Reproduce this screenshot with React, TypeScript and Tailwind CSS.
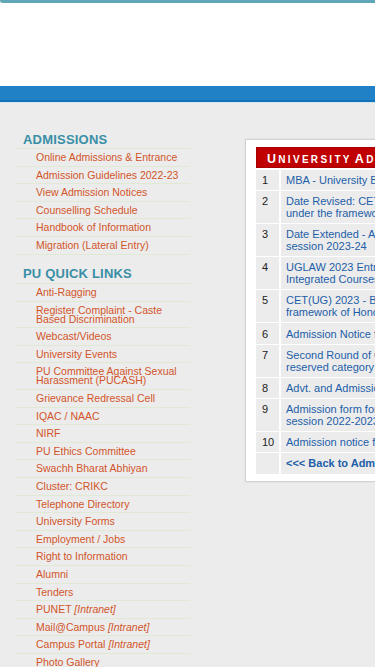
import React from "react";

type Item = { t: string; extra?: string };

const admissions: Item[] = [
  { t: "Online Admissions & Entrance" },
  { t: "Admission Guidelines 2022-23" },
  { t: "View Admission Notices" },
  { t: "Counselling Schedule" },
  { t: "Handbook of Information" },
  { t: "Migration (Lateral Entry)" },
];

const quick: Item[] = [
  { t: "Anti-Ragging" },
  { t: "Register Complaint - Caste\nBased Discrimination" },
  { t: "Webcast/Videos" },
  { t: "University Events" },
  { t: "PU Committee Against Sexual\nHarassment (PUCASH)" },
  { t: "Grievance Redressal Cell" },
  { t: "IQAC / NAAC" },
  { t: "NIRF" },
  { t: "PU Ethics Committee" },
  { t: "Swachh Bharat Abhiyan" },
  { t: "Cluster: CRIKC" },
  { t: "Telephone Directory" },
  { t: "University Forms" },
  { t: "Employment / Jobs" },
  { t: "Right to Information" },
  { t: "Alumni" },
  { t: "Tenders" },
  { t: "PUNET", extra: "[Intranet]" },
  { t: "Mail@Campus", extra: "[Intranet]" },
  { t: "Campus Portal", extra: "[Intranet]" },
  { t: "Photo Gallery" },
  { t: "Contact Us" },
];

const rows: { n: string; lines: string[]; bold?: boolean }[] = [
  { n: "1", lines: ["MBA - University Business School (UBS) Admissions 2023-24"] },
  { n: "2", lines: ["Date Revised: CET(PG) 2023 for admission to various PG Courses", "under the framework of NEP-2020"] },
  { n: "3", lines: ["Date Extended - Admission to B.Ed. Courses for the", "session 2023-24"] },
  { n: "4", lines: ["UGLAW 2023 Entrance Test for admission to 5-Year", "Integrated Courses B.A./B.Com. LL.B. (Hons.)"] },
  { n: "5", lines: ["CET(UG) 2023 - B.Sc. (Hons.) in various subjects under the", "framework of Honours School System"] },
  { n: "6", lines: ["Admission Notice for session 2023-24"] },
  { n: "7", lines: ["Second Round of Counselling for vacant seats of", "reserved category candidates"] },
  { n: "8", lines: ["Advt. and Admission Schedule 2023-24"] },
  { n: "9", lines: ["Admission form for Ph.D. programme for the", "session 2022-2023"] },
  { n: "10", lines: ["Admission notice for M.Phil. / Ph.D. programme"] },
  { n: "", lines: ["<<< Back to Admissions"], bold: true },
];

const headerWords = ["University", "Admissions", "2023-24"];

function LinkList({ items }: { items: Item[] }) {
  return (
    <ul className="border-b border-[#dfe9d4]">
      {items.map((it, i) => (
        <li
          key={i}
          className="border-t border-[#dfe9d4] pl-[20px] pt-[4px] pb-[3.6px] text-[10.5px] leading-[9px] text-[#d2552a] whitespace-pre-line"
        >
          {it.t}
          {it.extra ? (
            <>
              {" "}
              <i>{it.extra}</i>
            </>
          ) : null}
        </li>
      ))}
    </ul>
  );
}

export default function App() {
  return (
    <div
      className="w-full h-screen overflow-hidden bg-[#ececec]"
      style={{ fontFamily: '"Liberation Sans", Arial, sans-serif' }}
    >
      {/* top header */}
      <div className="h-[3px] bg-[#5fa7b8] rounded-bl-[3px]" />
      <div className="h-[83px] bg-white" />
      <div className="h-[16px] bg-[#2081c6] border-b-2 border-[#1172bc]" />
      <div className="h-[1px] bg-[#d3e3ee]" />

      <div className="flex w-[800px]">
        {/* left column */}
        <div className="w-[190px] shrink-0 pl-[16px] pt-[29px]">
          <h2 className="pl-[7px] h-[16px] leading-[16px] text-[13px] font-bold tracking-[0.2px] text-[#3a8fa6]">
            ADMISSIONS
          </h2>
          <LinkList items={admissions} />
          <h2 className="pl-[7px] mt-[11.5px] h-[16px] leading-[16px] text-[13px] font-bold tracking-[0.2px] text-[#3a8fa6] mb-[1px]">
            PU QUICK LINKS
          </h2>
          <LinkList items={quick} />
        </div>

        {/* right column */}
        <div className="pl-[55px] pt-[36px]">
          <div className="w-[440px] bg-white border border-[#d2d2d2] px-[10px] pt-[7px] pb-[7px] shadow-[0_0_2px_rgba(0,0,0,0.08)]">
            <div className="h-[21px] bg-[#c00000] border border-[#a80000] pl-[10px] flex items-center text-white font-bold tracking-[2.3px] whitespace-nowrap leading-none">
              {headerWords.map((w, i) => (
                <span key={i} className="mr-[3px]">
                  <span className="text-[12.5px]">{w[0].toUpperCase()}</span>
                  <span className="text-[10px]">{w.slice(1).toUpperCase()}</span>
                </span>
              ))}
            </div>
            <div className="flex flex-col gap-[1px] pt-[1.5px]">
              {rows.map((r, i) => (
                <div key={i} className="flex gap-[2px]">
                  <div className="w-[23px] shrink-0 bg-[#ececec] pl-[6px] py-[4.1px] text-[11px] leading-[12px] text-[#222]">
                    {r.n}
                  </div>
                  <div
                    className={`flex-1 bg-[#ececec] pl-[5px] py-[4.1px] text-[11px] leading-[12px] text-[#1d5ea8] whitespace-nowrap ${
                      r.bold ? "font-bold" : ""
                    }`}
                  >
                    {r.lines.map((l, j) => (
                      <div key={j}>{l}</div>
                    ))}
                  </div>
                </div>
              ))}
            </div>
          </div>
        </div>
      </div>
    </div>
  );
}
